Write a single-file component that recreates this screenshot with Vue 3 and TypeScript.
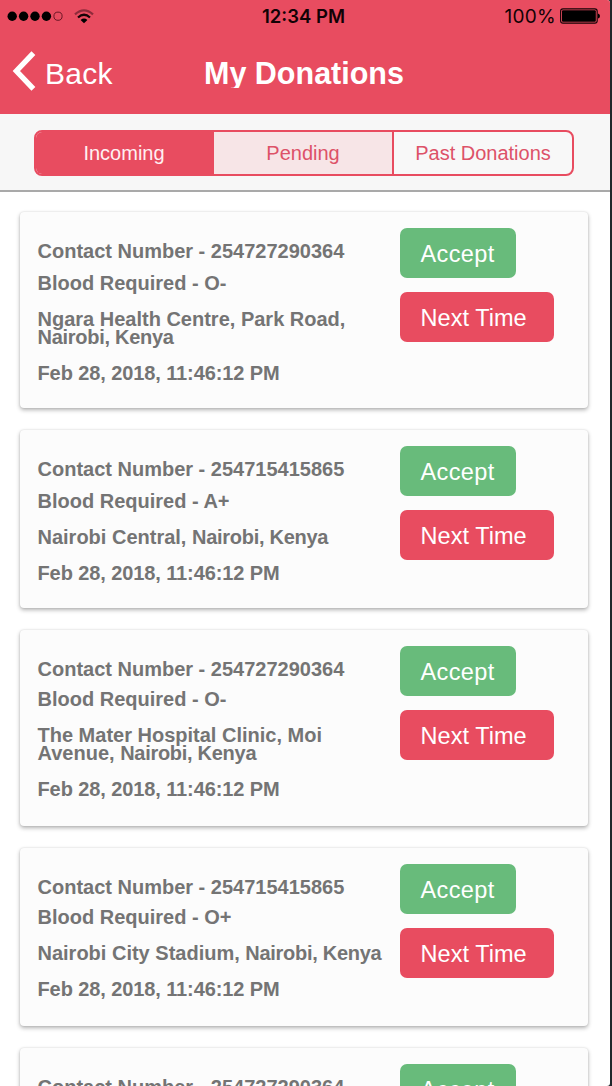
<script setup lang="ts">
import { ref } from 'vue'

interface Donation {
  id: number
  contact: string
  blood: string
  place: string
  city: string
  date: string
  tight?: boolean
}

const tabs: string[] = ['Incoming', 'Pending', 'Past Donations']
const active = ref(0)
const date = 'Feb 28, 2018, 11:46:12 PM'
const city = 'Nairobi, Kenya'

const donations: Donation[] = [
  { id: 1, contact: '254727290364', blood: 'O-', place: 'Ngara Health Centre, Park Road,', city, date },
  { id: 2, contact: '254715415865', blood: 'A+', place: 'Nairobi Central,', city, date },
  { id: 3, contact: '254727290364', blood: 'O-', place: 'The Mater Hospital Clinic, Moi Avenue,', city, date, tight: true },
  { id: 4, contact: '254715415865', blood: 'O+', place: 'Nairobi City Stadium,', city, date, tight: true },
  { id: 5, contact: '254727290364', blood: 'O-', place: 'Nairobi Central,', city, date },
]
</script>

<template>
  <div class="device">
    <div class="screen">
      <header class="header">
        <div class="status">
          <div class="signal">
            <svg class="dots" width="56" height="12" viewBox="0 0 56 12">
              <circle v-for="n in 4" :key="n" :cx="5.2 + (n - 1) * 11.4" cy="6.2" r="4.7" />
              <circle cx="51" cy="6.2" r="4.1" fill="none" stroke="#6a1625" stroke-width="1" />
            </svg>
            <svg class="wifi" width="20" height="15" viewBox="0 0 20 15">
              <path d="M1 5.4 Q10 -2.8 19 5.4" fill="none" stroke="#8e2b3b" stroke-width="2.2" />
              <path d="M4 8.5 Q10 3 16 8.5" fill="none" stroke="#160306" stroke-width="2.3" />
              <path d="M6.6 10.9 Q10 8 13.4 10.9 L10 14.3 Z" fill="#000" />
            </svg>
          </div>
          <div class="clock">12:34 PM</div>
          <div class="power">
            <span class="percent">100%</span>
            <svg width="41" height="16" viewBox="0 0 41 16">
              <rect x="0.6" y="0.9" width="36.6" height="14.2" rx="2.4" fill="none" stroke="#120205" stroke-width="1.1" />
              <rect x="2" y="2.3" width="33.8" height="11.4" rx="1" />
              <path d="M38 5.4 Q40 6 40 8 Q40 10 38 10.6 Z" />
            </svg>
          </div>
        </div>
        <nav class="navbar">
          <button class="back" type="button">
            <svg width="24" height="40" viewBox="0 0 24 40">
              <path d="M21.4 2.2 L4.4 20 L21.4 37.8" fill="none" stroke="#fff" stroke-width="5.4" />
            </svg>
            <span>Back</span>
          </button>
          <h1 class="title">My Donations</h1>
        </nav>
      </header>

      <div class="toolbar">
        <div class="segments">
          <button
            v-for="(tab, i) in tabs"
            :key="tab"
            type="button"
            class="segment"
            :class="{ active: active === i, pressed: i === 1 && active !== i }"
            @click="active = i"
          >{{ tab }}</button>
        </div>
      </div>

      <main class="list">
        <article v-for="d in donations" :key="d.id" class="card" :class="{ tight: d.tight }">
          <div class="details">
            <p class="contact">Contact Number - {{ d.contact }}</p>
            <p class="blood">Blood Required - {{ d.blood }}</p>
            <p class="place">{{ d.place }} <span class="city">{{ d.city }}</span></p>
            <p class="date">{{ d.date }}</p>
          </div>
          <div class="actions">
            <button class="btn accept" type="button">Accept</button>
            <button class="btn later" type="button">Next Time</button>
          </div>
        </article>
      </main>
    </div>
  </div>
</template>

<style>
body {
  margin: 0;
}
</style>

<style scoped>
.device {
  width: 612px;
  height: 1086px;
  box-sizing: border-box;
  padding-right: 2px;
  background: #20272b;
  overflow: hidden;
  font-family: "Liberation Sans", Arial, sans-serif;
}
.screen {
  height: 1086px;
  display: flex;
  flex-direction: column;
  background: #fff;
  border-radius: 0 3px 3px 0;
  overflow: hidden;
}
button {
  margin: 0;
  border: 0;
  font-family: inherit;
  cursor: pointer;
}
.header {
  height: 114px;
  flex: none;
  background: #e84c60;
}
.status {
  height: 32px;
  display: grid;
  grid-template-columns: 1fr 90px 1fr;
  align-items: center;
  padding: 0 10px 0 7px;
  box-sizing: border-box;
  font-family: Inter, "Liberation Sans", sans-serif;
  font-size: 19px;
  color: #120205;
}
.signal {
  display: flex;
  align-items: center;
}
.wifi {
  margin-left: 11px;
}
.clock {
  font-weight: 600;
  font-size: 18.5px;
  text-align: center;
  white-space: nowrap;
}
.power {
  display: flex;
  align-items: center;
  justify-content: flex-end;
  gap: 4px;
  margin-right: -1px;
}
.percent {
  letter-spacing: 0.3px;
}
.navbar {
  height: 82px;
  display: grid;
  grid-template-columns: 204px 1fr;
  align-items: center;
}
.back {
  display: flex;
  align-items: center;
  padding: 0 0 4px 12px;
  background: none;
  color: #fff;
  font-size: 30px;
}
.back span {
  margin-left: 9px;
  padding-top: 5px;
  letter-spacing: 0.3px;
}
.title {
  margin: 0;
  height: 30px;
  line-height: 30px;
  overflow: hidden;
  font-size: 30.5px;
  color: #fff;
  white-space: nowrap;
}
.toolbar {
  height: 78px;
  flex: none;
  box-sizing: border-box;
  padding: 16px 36px 0 34px;
  background: #f7f7f7;
  border-bottom: 2px solid #a9a9a9;
}
.segments {
  display: grid;
  grid-template-columns: 176px 180px 180px;
  height: 46px;
  box-sizing: border-box;
  border: 2px solid #e84c60;
  border-radius: 8px;
  overflow: hidden;
  background: #f8f8f8;
}
.segment {
  padding: 1px 0 0;
  background: transparent;
  color: #dd5268;
  font-size: 20px;
  white-space: nowrap;
}
.segment + .segment {
  border-left: 2px solid #e84c60;
}
.segment.pressed {
  background: #f7e5e7;
}
.segment.active {
  background: #e84c60;
  color: #fff0f2;
}
.list {
  display: flex;
  flex-direction: column;
  gap: 22px;
  padding: 20px 22px 0 20px;
}
.card {
  display: flex;
  flex: none;
  box-sizing: border-box;
  padding: 30px 18px 26px 17.5px;
  background: #fcfcfc;
  border-radius: 4px;
  box-shadow: 0 2px 4px rgba(0, 0, 0, 0.3), 0 0 2px rgba(0, 0, 0, 0.12);
}
.details {
  width: 362.5px;
  flex: none;
  font-size: 20px;
  font-weight: 700;
  line-height: 18px;
  color: #747474;
}
.details p {
  margin: 0;
}
.details .contact {
  margin-bottom: 14px;
}
.details .blood,
.details .place {
  margin-bottom: 18px;
}
.city {
  letter-spacing: -0.28px;
}
.date {
  letter-spacing: -0.1px;
}
.card.tight {
  padding-bottom: 28px;
}
.tight .details .contact {
  margin-bottom: 12px;
}
.actions {
  display: flex;
  flex-direction: column;
  gap: 14px;
  margin-top: -14px;
  margin-bottom: -14px;
}
.btn {
  height: 50px;
  box-sizing: border-box;
  padding: 2px 0 0 20.5px;
  border-radius: 7px;
  color: #fff;
  font-size: 23.5px;
  text-align: left;
}
.accept {
  width: 116px;
  background: #68bb7b;
  letter-spacing: 0.4px;
}
.later {
  width: 154px;
  background: #e84c60;
  letter-spacing: 0.05px;
}
</style>
